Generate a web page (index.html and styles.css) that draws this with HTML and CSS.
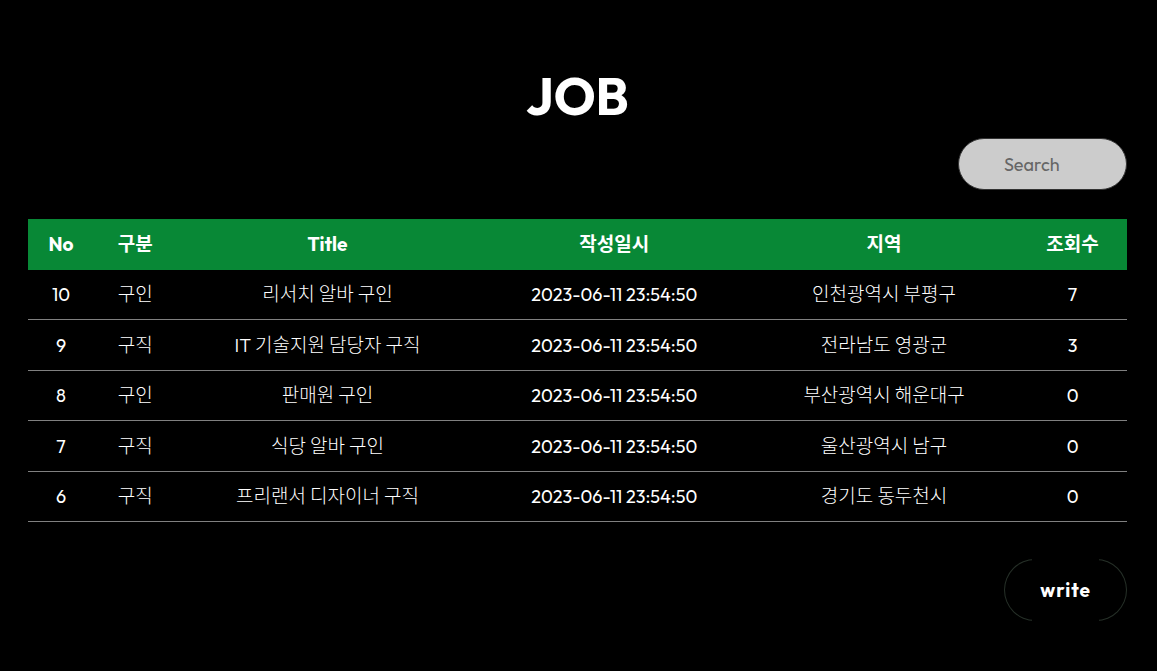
FILE: index.html
```html
<!DOCTYPE html>
<html lang="ko">
<head>
<meta charset="utf-8">
<meta name="viewport" content="width=device-width, initial-scale=1">
<title>JOB</title>
<link rel="stylesheet" href="styles.css">
</head>
<body>
<main class="page">
  <h1 class="title">JOB</h1>
  <form class="search" role="search">
    <input class="search-input" type="search" placeholder="Search" aria-label="Search">
  </form>
  <table class="board">
    <colgroup>
      <col class="col-no"><col class="col-type"><col class="col-title"><col class="col-date"><col class="col-area"><col class="col-views">
    </colgroup>
    <thead>
      <tr><th scope="col">No</th><th scope="col">구분</th><th scope="col">Title</th><th scope="col">작성일시</th><th scope="col">지역</th><th scope="col">조회수</th></tr>
    </thead>
    <tbody>
      <tr><td class="num">10</td><td>구인</td><td>리서치 알바 구인</td><td class="num">2023-06-11 23:54:50</td><td>인천광역시 부평구</td><td class="num">7</td></tr>
      <tr><td class="num">9</td><td>구직</td><td>IT 기술지원 담당자 구직</td><td class="num">2023-06-11 23:54:50</td><td>전라남도 영광군</td><td class="num">3</td></tr>
      <tr><td class="num">8</td><td>구인</td><td>판매원 구인</td><td class="num">2023-06-11 23:54:50</td><td>부산광역시 해운대구</td><td class="num">0</td></tr>
      <tr><td class="num">7</td><td>구직</td><td>식당 알바 구인</td><td class="num">2023-06-11 23:54:50</td><td>울산광역시 남구</td><td class="num">0</td></tr>
      <tr><td class="num">6</td><td>구직</td><td>프리랜서 디자이너 구직</td><td class="num">2023-06-11 23:54:50</td><td>경기도 동두천시</td><td class="num">0</td></tr>
    </tbody>
  </table>
  <div class="actions">
    <button class="write" type="button">write</button>
  </div>
</main>
</body>
</html>
```
FILE: styles.css
```css
* { box-sizing: border-box; }

body {
  margin: 0;
  background: #000;
  color: #fff;
  font-family: Outfit, Lato, "Noto Sans CJK KR", sans-serif;
  font-size: 18px;
}

.page { padding: 64px 30px 50px 28px; }

.title {
  margin: 0;
  font-size: 52px;
  line-height: 64px;
  font-weight: 700;
  text-align: center;
}

.search {
  display: flex;
  justify-content: flex-end;
  margin: 10px 0 29px;
}

.search-input {
  width: 169px;
  height: 52px;
  padding: 0 45px;
  border: 1px solid #333;
  border-radius: 26px;
  background: #ccc;
  color: #222;
  font: inherit;
  appearance: none;
}

.search-input::placeholder { color: #666; opacity: 1; }

.board {
  width: 100%;
  table-layout: fixed;
  border-collapse: separate;
  border-spacing: 0;
  font-size: 19px;
  text-align: center;
}

.col-no { width: 6%; }
.col-type { width: 7.5%; }
.col-title { width: 27.5%; }
.col-date { width: 24.7%; }
.col-area { width: 24.4%; }
.col-views { width: 9.9%; }

.board th {
  padding: 12px 0 13px;
  background: #088836;
  line-height: 26px;
  font-weight: 700;
}

.board td {
  padding: 12px 0;
  border-bottom: 1px solid #808080;
  line-height: 25px;
  font-weight: 300;
}

.board tr:nth-child(even) td { padding-top: 13px; }

.board .num {
  font-size: 18px;
  font-weight: 400;
}

.actions {
  display: flex;
  justify-content: flex-end;
  margin-top: 37px;
}

.write {
  padding: 18px 35px 17px;
  border: 1px solid transparent;
  border-radius: 31px;
  background:
    linear-gradient(#000, #000) padding-box,
    linear-gradient(90deg, #263028 28px, #000 28px, #000 calc(100% - 28px), #263028 calc(100% - 28px)) border-box;
  color: #fff;
  font: inherit;
  font-size: 19px;
  line-height: 25px;
  font-weight: 700;
  letter-spacing: 1px;
}
```
